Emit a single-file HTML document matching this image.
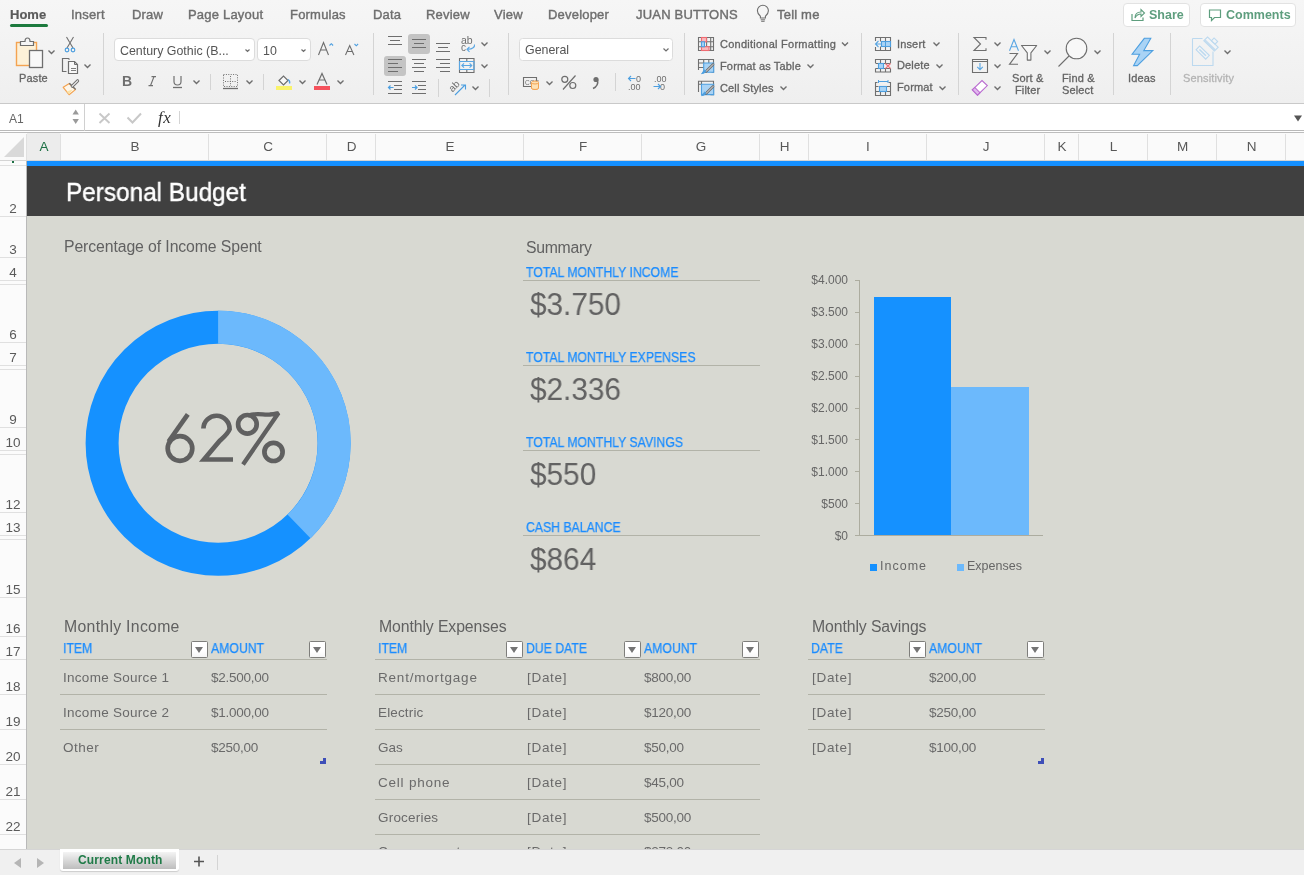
<!DOCTYPE html>
<html><head><meta charset="utf-8">
<style>
*{margin:0;padding:0;box-sizing:border-box}
html,body{width:1304px;height:875px;overflow:hidden;background:#f0f0f0;font-family:"Liberation Sans",sans-serif}
.t,.tab,.rl,.ch,.rn{will-change:transform}
.a{position:absolute}
.t{position:absolute;white-space:nowrap;line-height:1}
svg{position:absolute;overflow:visible}
#ribbon{position:absolute;left:0;top:0;width:1304px;height:104px;background:linear-gradient(#f6f6f6,#efefef);border-bottom:1px solid #c9c9c9}
.tab{position:absolute;top:8px;font-size:13px;font-weight:normal;color:#6e6e6e;white-space:nowrap;line-height:1;letter-spacing:0.2px;-webkit-text-stroke:0.4px #6e6e6e}
.sep{position:absolute;width:1px;background:#d2d2d2}
.rl{position:absolute;font-size:11px;color:#646464;white-space:nowrap;line-height:1;-webkit-text-stroke:0.3px currentColor;letter-spacing:0.15px}
.box{position:absolute;background:#fff;border:1px solid #dcdcdc;border-radius:4px}
.chev{position:absolute;width:6px;height:4px}
#fbar{position:absolute;left:0;top:104px;width:1304px;height:27px;background:#fff;border-bottom:1px solid #b9b9b9}
#colhdr{position:absolute;left:0;top:131px;width:1304px;height:30px;background:#fafafa;border-top:1px solid #fff;border-bottom:1px solid #d4d4d4}
#colhdr:before{content:"";position:absolute;left:0;top:0;width:1304px;height:1px;background:#bdbdbd}
.ch{position:absolute;top:10px;font-size:13.5px;color:#5a5a5a;line-height:1;text-align:center}
.cs{position:absolute;top:131px;width:1px;height:29px;background:#dcdcdc}
#rowhdr{position:absolute;left:0;top:161px;width:27px;height:688px;background:#fbfbfb;border-right:1px solid #b9b9b9;overflow:hidden}
.rn{position:absolute;left:0;width:26px;text-align:center;font-size:13.5px;color:#5a5a5a;line-height:1}
.rline{position:absolute;left:0;width:26px;height:1px;background:#e0e0e0}
#sheet{position:absolute;left:27px;top:161px;width:1277px;height:688px;background:#d8d9d2;overflow:hidden}
#tabbar{position:absolute;left:0;top:849px;width:1304px;height:26px;background:#f0f0f0;border-top:1px solid #d5d5d5}
.lbl{font-size:14px;color:#1a8cff;letter-spacing:0;transform:scaleX(0.875);transform-origin:0 0;-webkit-text-stroke:0.25px #1a8cff}
.big{font-size:32px;color:#626262;transform:scaleX(0.93);transform-origin:0 0}
.hl{position:absolute;height:1px;background:#b2b3a8}
.cell{font-size:13.5px;color:#6a6a6a}
.hd{font-size:14px;color:#1a8cff;letter-spacing:0;transform:scaleX(0.875);transform-origin:0 0;-webkit-text-stroke:0.25px #1a8cff}
.ttl{font-size:15.8px;color:#616161;letter-spacing:-0.1px}
.flt{position:absolute;width:17px;height:17px;background:linear-gradient(#fff 60%,#f6f6f6);border:1px solid #7e7e7b;border-radius:1.5px}
.flt:after{content:"";position:absolute;left:3.2px;top:5.2px;border-left:4.5px solid transparent;border-right:4.5px solid transparent;border-top:6px solid #747474}
.ax{font-size:12px;color:#666;text-align:right;width:50px}
</style></head><body>

<!-- RIBBON -->
<div id="ribbon">
  <div class="tab" style="left:10px;color:#5a5a5a;font-weight:bold;letter-spacing:0;-webkit-text-stroke:0.2px #5a5a5a">Home</div>
  <div class="a" style="left:10px;top:24px;width:38px;height:3px;background:#1d7a3e;border-radius:2px"></div>
  <div class="tab" style="left:71px">Insert</div>
  <div class="tab" style="left:132px">Draw</div>
  <div class="tab" style="left:188px">Page Layout</div>
  <div class="tab" style="left:290px">Formulas</div>
  <div class="tab" style="left:373px">Data</div>
  <div class="tab" style="left:426px">Review</div>
  <div class="tab" style="left:494px">View</div>
  <div class="tab" style="left:548px">Developer</div>
  <div class="tab" style="left:636px">JUAN BUTTONS</div>
  <div class="tab" style="left:777px">Tell me</div>
  <div class="box" style="left:114px;top:38px;width:141px;height:23px"></div>
<div class="box" style="left:257px;top:38px;width:54px;height:23px"></div>
<svg style="left:0;top:0" width="1304" height="104" fill="none" stroke-linecap="butt">
 <rect x="519.5" y="38.5" width="153" height="22" rx="3" fill="#fff" stroke="#dcdcdc"/>
 <g stroke="#d4d4d4" stroke-width="1">
  <line x1="103.5" y1="33" x2="103.5" y2="95"/>
  <line x1="373.5" y1="33" x2="373.5" y2="95"/>
  <line x1="508.5" y1="33" x2="508.5" y2="95"/>
  <line x1="684.5" y1="33" x2="684.5" y2="95"/>
  <line x1="861.5" y1="33" x2="861.5" y2="95"/>
  <line x1="958.5" y1="33" x2="958.5" y2="95"/>
  <line x1="1113.5" y1="33" x2="1113.5" y2="95"/>
  <line x1="1170.5" y1="33" x2="1170.5" y2="95"/>
  <line x1="210.5" y1="74" x2="210.5" y2="90"/>
  <line x1="263.5" y1="74" x2="263.5" y2="90"/>
  <line x1="438.5" y1="79" x2="438.5" y2="97"/>
  <line x1="489.5" y1="79" x2="489.5" y2="97"/>
  <line x1="615.5" y1="73" x2="615.5" y2="91"/>
 </g>
 <!-- chevrons -->
 <g stroke="#6e6e6e" stroke-width="1.4">
  <path d="M48.5 50.5l3 3 3-3"/>
  <path d="M84.5 64.5l3 3 3-3"/>
  <path d="M193.5 80.5l3 3 3-3"/>
  <path d="M246.5 80.5l3 3 3-3"/>
  <path d="M299.5 80.5l3 3 3-3"/>
  <path d="M337.5 80.5l3 3 3-3"/>
  <path d="M481.5 42.5l3 3 3-3"/>
  <path d="M481.5 64.5l3 3 3-3"/>
  <path d="M472.5 86.5l3 3 3-3"/>
  <path d="M546.5 81.5l3 3 3-3"/>
  <path d="M842 42.5l3 3 3-3"/>
  <path d="M807.5 64.5l3 3 3-3"/>
  <path d="M780.5 86.5l3 3 3-3"/>
  <path d="M933.5 42.5l3 3 3-3"/>
  <path d="M936.5 64.5l3 3 3-3"/>
  <path d="M939.5 86.5l3 3 3-3"/>
  <path d="M994.5 42.5l3 3 3-3"/>
  <path d="M994.5 64.5l3 3 3-3"/>
  <path d="M994.5 86.5l3 3 3-3"/>
  <path d="M1044.5 50.5l3 3 3-3"/>
  <path d="M1094.5 50.5l3 3 3-3"/>
  <path d="M1224.5 50.5l3 3 3-3"/>
 </g>
 <g stroke="#6e6e6e" stroke-width="1.2">
  <path d="M245.5 49.5l2 2 2-2"/>
  <path d="M301.5 49.5l2 2 2-2"/>
  <path d="M663.5 48.5l2.5 2.5 2.5-2.5"/>
 </g>
 <!-- Paste -->
 <rect x="16.5" y="42.5" width="20" height="23" fill="#fdf1d8" stroke="#f4a351" stroke-width="1.4"/>
 <path d="M20.5 45.5v-4h4.5c0-2 1-3.5 2.5-3.5s2.5 1.5 2.5 3.5h3.5v4z" fill="#f5f5f5" stroke="#6e6e6e" stroke-width="1.2"/>
 <rect x="29.5" y="50.5" width="13" height="17" fill="#f8f8f8" stroke="#6e6e6e" stroke-width="1.3"/>
 <!-- scissors -->
 <g stroke="#707070" stroke-width="1.1"><path d="M66.5 37l6.5 11M73.5 37l-6.5 11"/></g>
 <g stroke="#4d9fe0" stroke-width="1.2"><circle cx="67" cy="50" r="1.8"/><circle cx="73" cy="50" r="1.8"/></g>
 <!-- copy -->
 <path d="M66.5 71.5h-4v-13h6l1 1" stroke="#6e6e6e" stroke-width="1.2" fill="none"/>
 <path d="M68.5 61.5h6l3 3v9h-9z" stroke="#6e6e6e" stroke-width="1.2" fill="#f8f8f8"/>
 <path d="M74.5 61.5v3h3" stroke="#6e6e6e" stroke-width="1"/>
 <path d="M71 68.5h5M71 70.5h5" stroke="#6e6e6e" stroke-width="0.9"/>
 <!-- format painter -->
 <path d="M69.3 83.6L63.2 87.3L69.1 94.7L75.4 89.6z" fill="#fdf6ea" stroke="#f4a351" stroke-width="1.2" stroke-linejoin="round"/>
 <path d="M66.5 91.5L72.5 89.5L69.1 94.2z" fill="#fbe3a8"/>
 <path d="M69.3 83.3L75.7 89.5" stroke="#707070" stroke-width="1.4"/>
 <path d="M72.3 86.2L77.6 80.8" stroke="#707070" stroke-width="3.2" stroke-linecap="round"/>
 <path d="M72.3 86.2L77.6 80.8" stroke="#f4f4f4" stroke-width="1.2" stroke-linecap="round"/>
 <!-- font -->
 <g stroke="#6e6e6e" stroke-width="1.1">
  <path d="M318.5 55l5-12.5 5 12.5M320.5 50h6"/>
  <path d="M345.5 55l4.2-9.5 4.2 9.5M347.2 51.5h5"/>
 </g>
 <path d="M329.5 45.5l1.8-1.8 1.8 1.8" stroke="#4d9fe0" stroke-width="1.1"/>
 <path d="M354.5 44l1.8 1.8 1.8-1.8" stroke="#4d9fe0" stroke-width="1.1"/>
 <!-- border icon -->
 <path d="M223.5 74.5h14v12h-14z" stroke="#707070" stroke-width="1" stroke-dasharray="1 1.4"/>
 <path d="M230.5 76v10M225 81.5h11" stroke="#707070" stroke-width="1" stroke-dasharray="1 1.4"/>
 <path d="M223 88.5h15" stroke="#6e6e6e" stroke-width="1.3"/>
 <!-- fill color -->
 <path d="M279 80.5l4.5-4.5 4.5 4.5-4.5 4.5z" fill="#f8f8f8" stroke="#6e6e6e" stroke-width="1.2"/>
 <path d="M288 79.5c1.5 1 2 2.5 1.5 4" stroke="#4d9fe0" stroke-width="1.3"/>
 <rect x="276" y="86" width="16" height="4" fill="#f9f36b"/>
 <!-- font color -->
 <path d="M317 84.5l5-11 5 11M319 80h6" stroke="#6e6e6e" stroke-width="1.2"/>
 <rect x="314" y="86" width="16" height="4" fill="#f5525c"/>
 <!-- align -->
 <rect x="408" y="34" width="22" height="20" rx="3" fill="#c4c4c4"/>
 <rect x="384" y="56" width="22" height="20" rx="3" fill="#c4c4c4"/>
 <g stroke="#6e6e6e" stroke-width="1.1">
  <path d="M388 36.5h14M390 40.5h10M388 44.5h14"/>
  <path d="M412 39.5h14M414 43.5h10M412 47.5h14"/>
  <path d="M436 43.5h14M438 47.5h10M436 51.5h14"/>
  <path d="M388 59.5h14M388 63.5h10M388 67.5h14M388 71.5h10"/>
  <path d="M412 59.5h14M414 63.5h10M412 67.5h14M414 71.5h10"/>
  <path d="M436 59.5h14M440 63.5h10M436 67.5h14M440 71.5h10"/>
  <path d="M388 81.5h14M394 85.5h8M394 89.5h8M388 93.5h14"/>
  <path d="M412 81.5h14M418 85.5h8M418 89.5h8M412 93.5h14"/>
 </g>
 <g stroke="#4d9fe0" stroke-width="1.2">
  <path d="M388.5 87.5h5M390.5 85.5l-2 2 2 2"/>
  <path d="M412 87.5h5M415 85.5l2 2-2 2"/>
 </g>
 <!-- wrap text -->
 <text x="461" y="43.8" font-size="10.5" fill="#6e6e6e" stroke="none" font-family="Liberation Sans">ab</text>
 <text x="461" y="50.8" font-size="10" fill="#6e6e6e" stroke="none" font-family="Liberation Sans">c</text>
 <path d="M474.5 44.5c0.5 2.5-2 4.5-6.5 4.8M469.5 46.8l-2.5 2.5 2.5 2.5" stroke="#5aa6e3" stroke-width="1.1"/>
 <!-- merge -->
 <path d="M459.5 58.5h14.5v14h-14.5z" stroke="#6e6e6e" stroke-width="1.1"/>
 <path d="M466.8 58.5v3M466.8 69.5v3" stroke="#6e6e6e" stroke-width="1.1"/>
 <path d="M459.5 61.5h14.5v8h-14.5z" stroke="#5aa6e3" stroke-width="1.1"/>
 <path d="M461.8 65.5h10M464 63.3l-2.2 2.2 2.2 2.2M469.6 63.3l2.2 2.2-2.2 2.2" stroke="#5aa6e3" stroke-width="1.1"/>
 <!-- orientation -->
 <text x="0" y="0" font-size="10" fill="#6e6e6e" stroke="none" font-family="Liberation Sans" transform="translate(452.5 92.5) rotate(-45)">ab</text>
 <path d="M455 95l10-10M461 85h4.5v4.5" stroke="#4d9fe0" stroke-width="1.1"/>
 <!-- number -->
 <path d="M523.5 77.5h13v9h-13z" stroke="#6e6e6e" stroke-width="1.1"/>
 <text x="525" y="85" font-size="6.5" fill="#6e6e6e" stroke="none" font-family="Liberation Sans">CCC</text>
 <g fill="#fde1b5" stroke="#f4a351" stroke-width="1"><ellipse cx="535" cy="88" rx="3.5" ry="1.5"/><path d="M531.5 82.5v5.5a3.5 1.5 0 0 0 7 0v-5.5"/><ellipse cx="535" cy="82.5" rx="3.5" ry="1.5"/></g>
 <g stroke="#6e6e6e" stroke-width="1.2"><circle cx="564.8" cy="79.3" r="3"/><circle cx="572.8" cy="85.5" r="3"/><path d="M575.5 75.5l-12.5 14"/></g>
 <circle cx="596" cy="79.5" r="2.6" fill="#6e6e6e"/>
 <path d="M597.5 80c0.8 4-1 7-4.5 8.5" stroke="#6e6e6e" stroke-width="1.6"/>
 <text x="636" y="82" font-size="9" fill="#6e6e6e" stroke="none" font-family="Liberation Sans">0</text>
 <text x="628" y="90" font-size="9" fill="#6e6e6e" stroke="none" font-family="Liberation Sans">.00</text>
 <path d="M628.5 78.5h7M631 76l-2.5 2.5 2.5 2.5" stroke="#4d9fe0" stroke-width="1.1"/>
 <text x="654" y="82" font-size="9" fill="#6e6e6e" stroke="none" font-family="Liberation Sans">.00</text>
 <text x="660" y="90" font-size="9" fill="#6e6e6e" stroke="none" font-family="Liberation Sans">0</text>
 <path d="M653.5 86.5h7M658 84l2.5 2.5-2.5 2.5" stroke="#4d9fe0" stroke-width="1.1"/>
 <!-- styles icons -->
 <g stroke="#707070" stroke-width="1.1">
  <path d="M698.5 37.5h15v13h-15zM698.5 41.8h15M698.5 46.7h15M701.5 37.5v13M706.6 37.5v13M710.7 37.5v13"/>
 </g>
 <rect x="701.5" y="37.5" width="5" height="4.3" fill="#f8b8bc" stroke="#ef6a72" stroke-width="1.1"/>
 <rect x="701.5" y="46.7" width="7.5" height="3.8" fill="#f8b8bc" stroke="#ef6a72" stroke-width="1.1"/>
 <rect x="701.5" y="41.8" width="3" height="4.9" fill="#a9d3f5" stroke="#4d9fe0" stroke-width="1.1"/>
 <g stroke="#707070" stroke-width="1.1">
  <path d="M698.5 70v-10.5h15v12.8h-2M698.5 63h5.2M698.5 67.5h5.2M703.7 59.5v3.5M708.8 59.5v3.5"/>
  <path d="M698.5 92v-10.7h15v13.3h-3M698.5 84.2h3M701.5 81.3v3"/>
 </g>
 <path d="M703.7 72.3V63h10v9.3z" fill="#a9d3f5" stroke="#4d9fe0" stroke-width="1.1"/>
 <path d="M701.5 94.6V84.2h12.2v10.4z" fill="#a9d3f5" stroke="#4d9fe0" stroke-width="1.1"/>
 <path d="M713 64.5l-7 7" stroke="#707070" stroke-width="2.6" stroke-linecap="round"/>
 <path d="M713 64.5l-7 7" stroke="#f0f0f0" stroke-width="0.9" stroke-linecap="round"/>
 <path d="M706 71c-1 1.8-2.3 2.6-4.5 2.6 1.2-0.6 1.5-2.5 3-3.5z" fill="#4d9fe0" stroke="#4d9fe0" stroke-width="0.9"/>
 <path d="M713 86.5l-7 7" stroke="#707070" stroke-width="2.6" stroke-linecap="round"/>
 <path d="M713 86.5l-7 7" stroke="#f0f0f0" stroke-width="0.9" stroke-linecap="round"/>
 <path d="M706 93c-1 1.8-2.3 2.6-4.5 2.6 1.2-0.6 1.5-2.5 3-3.5z" fill="#4d9fe0" stroke="#4d9fe0" stroke-width="0.9"/>
 <!-- cells icons -->
 <g stroke="#707070" stroke-width="1.1">
  <path d="M875.5 41v-3.5h15v13h-15v-3.5M880.5 41.5h1M880.5 46.5h1M880.5 37.5v3.5M885.5 37.5v3.5M880.5 47v3.5M885.5 47v3.5"/>
  <path d="M875.5 63v-3.5h15v3.5M875.5 68.5v3.5h15v-3.5M875.5 63.5h3M875.5 68.5h3M880.5 59.5v3.5M885.5 59.5v3.5M880.5 68.5v3.5M885.5 68.5v3.5M884 63.5h6.5M884 68.5h6.5"/>
  <path d="M877.5 82.5h-2v13h15v-13h-2M875.5 86.5h3M887 86.5h3.5M875.5 91.5h15M880.5 91.5v4M885.5 91.5v4"/>
 </g>
 <rect x="881.5" y="41.5" width="9" height="5" fill="#a9d3f5" stroke="#4d9fe0" stroke-width="1.1"/>
 <path d="M885.5 41.5v5" stroke="#4d9fe0" stroke-width="1"/>
 <path d="M881.5 44h-6M878.5 41l-3 3 3 3" stroke="#5aa6e3" stroke-width="1.1"/>
 <rect x="878.5" y="63.5" width="5" height="5" fill="#a9d3f5" stroke="#4d9fe0" stroke-width="1.1"/>
 <path d="M885.5 63.5l5 5M890.5 63.5l-5 5" stroke="#f07078" stroke-width="1.1"/>
 <rect x="879.5" y="86.5" width="7" height="5" fill="#a9d3f5" stroke="#4d9fe0" stroke-width="1.1"/>
 <path d="M878.5 81.5h9.5M878.5 80v3M888 80v3" stroke="#4d9fe0" stroke-width="1"/>
 <!-- editing -->
 <path d="M986 39.8v-2.3h-12l6.5 6.5-6.5 6.5h12v-2.3" stroke="#6e6e6e" stroke-width="1.1"/>
 <path d="M972.5 59.5h15v13h-15zM972.5 61.5h15" stroke="#6e6e6e" stroke-width="1.1"/>
 <path d="M980 63v6.5M977.2 66.8l2.8 2.8 2.8-2.8" stroke="#5aa6e3" stroke-width="1.1"/>
 <path d="M972.3 89.8L982 80.6L987.3 85.6L977.5 95.2z" fill="#fff" stroke="#b96bd0" stroke-width="1.1"/>
 <path d="M972.3 89.8L974.8 87.4L980 92.7L977.5 95.2z" fill="#e2b8ee" stroke="#b96bd0" stroke-width="1.1"/>
 <!-- sort filter -->
 <path d="M1009.5 50.8L1014 39.5L1018.5 50.8M1011.2 46.8h5.6" stroke="#5aa6e3" stroke-width="1.1"/>
 <path d="M1009.5 53.5h8l-8 10.8h8.5" stroke="#6e6e6e" stroke-width="1.1"/>
 <path d="M1021.5 45.5h15.2l-5.8 7.3v7.3h-3.6v-7.3z" fill="#f8f8f8" stroke="#6e6e6e" stroke-width="1.1" stroke-linejoin="round"/>
 <circle cx="1076.5" cy="48.5" r="10.3" fill="#f8f8f8" stroke="#6e6e6e" stroke-width="1.1"/>
 <path d="M1069 56l-10.5 10.5" stroke="#6e6e6e" stroke-width="1.1"/>
 <!-- ideas -->
 <path d="M1144.3 38.3h6.5l-7 12.3h9l-15.5 15h-3.7l6-11.4h-7.5z" fill="#a9d3f5" stroke="#4d9fe0" stroke-width="1.1"/>
 <!-- sensitivity -->
 <path d="M1192.5 38.5h10M1192.5 38.5v27h20.5v-14" stroke="#bcd9ef" stroke-width="1.1"/>
 <g transform="translate(1202.7 52.6) rotate(44)" stroke="#bcd9ef" stroke-width="1.1" fill="#f2f4f6"><rect x="-6.7" y="-2.6" width="13.4" height="5.2"/><path d="M-4.5 0h9" stroke-width="1.6"/></g>
 <g transform="translate(1211 44) rotate(44)" fill="#f2f4f6" stroke="#bcd9ef" stroke-width="1.1"><rect x="-7.4" y="-2.7" width="14.8" height="5.4"/><rect x="-7.4" y="0.6" width="14.8" height="2.1" fill="#c4dcef" stroke="none"/><rect x="-2" y="-6.5" width="5" height="3.8"/></g>
</svg>
<div class="t" style="left:120px;top:44.5px;font-size:12.4px;color:#555">Century Gothic (B...</div>
<div class="t" style="left:263px;top:44.5px;font-size:12.4px;color:#555">10</div>
<div class="t" style="left:525px;top:44.4px;font-size:12.4px;color:#555">General</div>
<div class="t" style="left:122px;top:74.2px;font-size:14px;font-weight:bold;color:#6e6e6e">B</div>
<svg style="left:0;top:0" width="200" height="100" fill="none" stroke="#707070" stroke-width="1.2"><path d="M151.5 76.6h4.5M148.5 85.6h4.5M154 76.6L150.5 85.6"/></svg>
<svg style="left:0;top:0" width="200" height="100" fill="none" stroke="#707070" stroke-width="1.2"><path d="M174 76v5.5a3.5 3.5 0 0 0 7 0V76"/><path d="M173 87.5h9" stroke-width="1.3"/></svg>
<div class="t rl" style="left:19px;top:72.7px">Paste</div>
<div class="t rl" style="left:720px;top:39px;letter-spacing:0.25px">Conditional Formatting</div>
<div class="t rl" style="left:720px;top:60.7px">Format as Table</div>
<div class="t rl" style="left:720px;top:82.5px">Cell Styles</div>
<div class="t rl" style="left:897px;top:38.5px">Insert</div>
<div class="t rl" style="left:897px;top:60.2px">Delete</div>
<div class="t rl" style="left:897px;top:82px">Format</div>
<div class="t rl" style="left:1012px;top:73.2px">Sort &amp;</div>
<div class="t rl" style="left:1015px;top:85px">Filter</div>
<div class="t rl" style="left:1062px;top:73.2px">Find &amp;</div>
<div class="t rl" style="left:1062px;top:85px">Select</div>
<div class="t rl" style="left:1128px;top:73.2px">Ideas</div>
<div class="t rl" style="left:1183px;top:73.2px;color:#b4b4b4">Sensitivity</div>
<!-- bulb -->
<svg style="left:0;top:0" width="1304" height="30" fill="none">
 <g transform="translate(0.9 1)"><path d="M759.5 17v-1.8c-2-1.6-3-3.3-3-5.4a5.5 5.5 0 0 1 11 0c0 2.1-1 3.8-3 5.4v1.8z" stroke="#6e6e6e" stroke-width="1.1"/>
 <path d="M759.8 18.8h4.4M760.3 20.3h3.4" stroke="#6e6e6e" stroke-width="1"/></g>
</svg>
<!-- share/comments -->
<div class="box" style="left:1123px;top:3px;width:67px;height:24px;border-color:#e2e2e2"></div>
<div class="box" style="left:1200px;top:3px;width:96px;height:24px;border-color:#e2e2e2"></div>
<svg style="left:0;top:0" width="1304" height="30" fill="none">
 <path d="M1132 14v6.5h11v-3" stroke="#5e9e7e" stroke-width="1.2"/>
 <path d="M1135 18c0-4 2.5-6 6-6v-2.5l3.5 3.5-3.5 3.5v-2.5c-3 0-4.5 1-6 4z" stroke="#5e9e7e" stroke-width="1.1"/>
 <path d="M1209.5 10h11v7.5h-6l-3 3v-3h-2z" stroke="#5e9e7e" stroke-width="1.2"/>
</svg>
<div class="t" style="left:1149px;top:8.8px;font-size:12.5px;font-weight:bold;color:#5e9e7e">Share</div>
<div class="t" style="left:1226px;top:8.8px;font-size:12.5px;font-weight:bold;color:#5e9e7e">Comments</div>

</div>

<!-- FORMULA BAR -->
<div id="fbar"></div>
<div class="t" style="left:9px;top:112.8px;font-size:12px;color:#666">A1</div>
<svg style="left:0;top:104px" width="1304" height="27" fill="none">
 <path d="M72.5 10.5l3.2-5 3.2 5z" fill="#9a9a9a"/>
 <path d="M72.5 15l3.2 5 3.2-5z" fill="#9a9a9a"/>
 <path d="M84.5 0v27" stroke="#d0d0d0"/>
 <path d="M99.5 9.5l10 9.5M109.5 9.5l-10 9.5" stroke="#c8c8c8" stroke-width="1.9"/>
 <path d="M127.5 13.5l5 5 8.5-9" stroke="#c8c8c8" stroke-width="2"/>
 <path d="M179.5 7v13" stroke="#d4d4d4"/>
 <path d="M1294 11.5h8l-4 6z" fill="#555"/>
</svg>
<div class="t" style="left:157.5px;top:108.5px;font-size:17px;font-style:italic;font-family:'Liberation Serif',serif;color:#333;letter-spacing:0.5px">fx</div>


<!-- COLUMN HEADER -->
<div id="colhdr"></div>
<div class="a" style="left:27px;top:133px;width:33px;height:27px;background:#ececec"></div>
<svg style="left:0;top:131px" width="1304" height="30" fill="none">
<path d="M26.5 3v26" stroke="#e0e0e0"/>
<path d="M60.5 3v26" stroke="#e0e0e0"/>
<path d="M208.5 3v26" stroke="#e0e0e0"/>
<path d="M326.5 3v26" stroke="#e0e0e0"/>
<path d="M375.5 3v26" stroke="#e0e0e0"/>
<path d="M523.5 3v26" stroke="#e0e0e0"/>
<path d="M641.5 3v26" stroke="#e0e0e0"/>
<path d="M759.5 3v26" stroke="#e0e0e0"/>
<path d="M808.5 3v26" stroke="#e0e0e0"/>
<path d="M926.5 3v26" stroke="#e0e0e0"/>
<path d="M1044.5 3v26" stroke="#e0e0e0"/>
<path d="M1078.5 3v26" stroke="#e0e0e0"/>
<path d="M1147.5 3v26" stroke="#e0e0e0"/>
<path d="M1216.5 3v26" stroke="#e0e0e0"/>
<path d="M1285.5 3v26" stroke="#e0e0e0"/>
<path d="M24 6v20h-20z" fill="#d9d9d9"/>
</svg>
<div class="ch" style="left:26.5px;width:34.0px;top:139.5px;color:#1e7145">A</div>
<div class="ch" style="left:60.5px;width:148.0px;top:139.5px;color:#585858">B</div>
<div class="ch" style="left:208.5px;width:118.0px;top:139.5px;color:#585858">C</div>
<div class="ch" style="left:326.5px;width:49.0px;top:139.5px;color:#585858">D</div>
<div class="ch" style="left:375.5px;width:148.0px;top:139.5px;color:#585858">E</div>
<div class="ch" style="left:523.5px;width:118.0px;top:139.5px;color:#585858">F</div>
<div class="ch" style="left:641.5px;width:118.0px;top:139.5px;color:#585858">G</div>
<div class="ch" style="left:759.5px;width:49.0px;top:139.5px;color:#585858">H</div>
<div class="ch" style="left:808.5px;width:118.0px;top:139.5px;color:#585858">I</div>
<div class="ch" style="left:926.5px;width:118.0px;top:139.5px;color:#585858">J</div>
<div class="ch" style="left:1044.5px;width:34.0px;top:139.5px;color:#585858">K</div>
<div class="ch" style="left:1078.5px;width:69.0px;top:139.5px;color:#585858">L</div>
<div class="ch" style="left:1147.5px;width:69.0px;top:139.5px;color:#585858">M</div>
<div class="ch" style="left:1216.5px;width:69.0px;top:139.5px;color:#585858">N</div>

<!-- ROW HEADER -->
<div id="rowhdr"></div>
<svg style="left:0;top:0" width="27" height="875" fill="none">
<path d="M0 165.5h26" stroke="#e0e0e0"/>
<path d="M0 216.5h26" stroke="#e0e0e0"/>
<path d="M0 257.5h26" stroke="#e0e0e0"/>
<path d="M0 280.5h26" stroke="#e0e0e0"/>
<path d="M0 284.5h26" stroke="#e0e0e0"/>
<path d="M0 342.5h26" stroke="#e0e0e0"/>
<path d="M0 365.5h26" stroke="#e0e0e0"/>
<path d="M0 369.5h26" stroke="#e0e0e0"/>
<path d="M0 427.5h26" stroke="#e0e0e0"/>
<path d="M0 450.5h26" stroke="#e0e0e0"/>
<path d="M0 454.5h26" stroke="#e0e0e0"/>
<path d="M0 512.5h26" stroke="#e0e0e0"/>
<path d="M0 535.5h26" stroke="#e0e0e0"/>
<path d="M0 539.5h26" stroke="#e0e0e0"/>
<path d="M0 597.5h26" stroke="#e0e0e0"/>
<path d="M0 636.5h26" stroke="#e0e0e0"/>
<path d="M0 659.5h26" stroke="#e0e0e0"/>
<path d="M0 694.5h26" stroke="#e0e0e0"/>
<path d="M0 729.5h26" stroke="#e0e0e0"/>
<path d="M0 764.5h26" stroke="#e0e0e0"/>
<path d="M0 799.5h26" stroke="#e0e0e0"/>
<path d="M0 834.5h26" stroke="#e0e0e0"/>
<path d="M0 869.5h26" stroke="#e0e0e0"/>
</svg>
<div class="rn" style="top:201.6px">2</div>
<div class="rn" style="top:242.6px">3</div>
<div class="rn" style="top:265.6px">4</div>
<div class="rn" style="top:327.6px">6</div>
<div class="rn" style="top:350.6px">7</div>
<div class="rn" style="top:412.6px">9</div>
<div class="rn" style="top:435.6px">10</div>
<div class="rn" style="top:497.6px">12</div>
<div class="rn" style="top:520.6px">13</div>
<div class="rn" style="top:582.6px">15</div>
<div class="rn" style="top:621.6px">16</div>
<div class="rn" style="top:644.6px">17</div>
<div class="rn" style="top:679.6px">18</div>
<div class="rn" style="top:714.6px">19</div>
<div class="rn" style="top:749.6px">20</div>
<div class="rn" style="top:784.6px">21</div>
<div class="rn" style="top:819.6px">22</div>
<div class="rn" style="top:854.6px">23</div>
<div class="a" style="left:12px;top:161px;width:2px;height:2px;background:#1e7145"></div>

<!-- SHEET -->
<div id="sheet"></div>
<div class="a" style="left:27px;top:161px;width:1277px;height:5px;background:#1590ff"></div>
<div class="a" style="left:27px;top:166px;width:1277px;height:50px;background:#404040"></div>
<div class="t" style="left:65.5px;top:178.6px;font-size:26px;color:#fff;transform:scaleX(0.936);transform-origin:0 0;-webkit-text-stroke:0.45px #fff">Personal Budget</div>

<div class="t ttl" style="left:64px;top:239.4px">Percentage of Income Spent</div>
<div class="t ttl" style="left:526px;top:239.8px;letter-spacing:-0.3px">Summary</div>

<div class="t lbl" style="left:526px;top:265.0px">TOTAL MONTHLY INCOME</div>
<div class="hl" style="left:523px;top:280px;width:237px"></div>
<div class="t big" style="left:529.5px;top:287.5px">$3.750</div>
<div class="t lbl" style="left:526px;top:350.0px">TOTAL MONTHLY EXPENSES</div>
<div class="hl" style="left:523px;top:365px;width:237px"></div>
<div class="t big" style="left:529.5px;top:372.5px">$2.336</div>
<div class="t lbl" style="left:526px;top:435.0px">TOTAL MONTHLY SAVINGS</div>
<div class="hl" style="left:523px;top:450px;width:237px"></div>
<div class="t big" style="left:529.5px;top:457.5px">$550</div>
<div class="t lbl" style="left:526px;top:520.0px">CASH BALANCE</div>
<div class="hl" style="left:523px;top:535px;width:237px"></div>
<div class="t big" style="left:529.5px;top:542.5px">$864</div>

<!-- donut -->
<svg style="left:0;top:0" width="1304" height="875">
  <circle cx="218.1" cy="443.2" r="116" fill="none" stroke="#1591ff" stroke-width="33"/>
  <path d="M218.1 327.2 A116 116 0 0 1 299.0 526.4" fill="none" stroke="#6cb9fc" stroke-width="33"/>
</svg>
<svg style="left:0;top:0" width="1304" height="875" fill="none" stroke="#606060" stroke-width="4.7">
 <circle cx="180" cy="448.5" r="12.3"/>
 <path d="M187.8 414.3L168.6 441.5"/>
 <path d="M203.4 428.5A13 13 0 1 1 229.6 429.2C228 433.5 225 436 220 440.5L204 459.5H233"/>
 <circle cx="247.4" cy="424.3" r="9.3"/>
 <path d="M248 415.5C258 412.5 264 415.5 270 414.5C274 414 276 413.5 278.5 413L243 464.5" stroke-width="4.3" stroke-linejoin="bevel"/>
 <circle cx="273.5" cy="451.9" r="9.1"/>
</svg>

<!-- bar chart -->
<div class="t ax" style="left:798px;top:274.3px">$4.000</div>
<div class="t ax" style="left:798px;top:306.3px">$3.500</div>
<div class="t ax" style="left:798px;top:338.3px">$3.000</div>
<div class="t ax" style="left:798px;top:370.3px">$2.500</div>
<div class="t ax" style="left:798px;top:402.3px">$2.000</div>
<div class="t ax" style="left:798px;top:434.3px">$1.500</div>
<div class="t ax" style="left:798px;top:466.3px">$1.000</div>
<div class="t ax" style="left:798px;top:498.3px">$500</div>
<div class="t ax" style="left:798px;top:530.3px">$0</div>
<div class="a" style="left:859px;top:280px;width:1px;height:256px;background:#acac9f"></div>
<div class="a" style="left:855px;top:535px;width:188px;height:1px;background:#acac9f"></div>
<div class="a" style="left:855px;top:280px;width:4px;height:1px;background:#acac9f"></div>
<div class="a" style="left:855px;top:312px;width:4px;height:1px;background:#acac9f"></div>
<div class="a" style="left:855px;top:344px;width:4px;height:1px;background:#acac9f"></div>
<div class="a" style="left:855px;top:376px;width:4px;height:1px;background:#acac9f"></div>
<div class="a" style="left:855px;top:408px;width:4px;height:1px;background:#acac9f"></div>
<div class="a" style="left:855px;top:439px;width:4px;height:1px;background:#acac9f"></div>
<div class="a" style="left:855px;top:471px;width:4px;height:1px;background:#acac9f"></div>
<div class="a" style="left:855px;top:503px;width:4px;height:1px;background:#acac9f"></div>
<div class="a" style="left:874px;top:297px;width:77px;height:238px;background:#1591ff"></div>
<div class="a" style="left:951px;top:387px;width:78px;height:148px;background:#6cb9fc"></div>
<div class="a" style="left:870px;top:564px;width:7px;height:7px;background:#1591ff"></div>
<div class="t" style="left:880px;top:560.2px;font-size:12.5px;color:#666;letter-spacing:1px">Income</div>
<div class="a" style="left:957px;top:564px;width:7px;height:7px;background:#6cb9fc"></div>
<div class="t" style="left:967px;top:560.2px;font-size:12.5px;color:#666">Expenses</div>

<!-- tables -->
<div class="t ttl" style="left:64px;top:618.5px;letter-spacing:0.3px">Monthly Income</div>
<div class="t ttl" style="left:379px;top:618.5px">Monthly Expenses</div>
<div class="t ttl" style="left:812px;top:618.5px">Monthly Savings</div>

<div class="t hd" style="left:63px;top:641.2px">ITEM</div>
<div class="t hd" style="left:211px;top:641.2px">AMOUNT</div>
<div class="t hd" style="left:378px;top:641.2px">ITEM</div>
<div class="t hd" style="left:526px;top:641.2px">DUE DATE</div>
<div class="t hd" style="left:644px;top:641.2px">AMOUNT</div>
<div class="t hd" style="left:811px;top:641.2px">DATE</div>
<div class="t hd" style="left:929px;top:641.2px">AMOUNT</div>
<div class="flt" style="left:191px;top:641px"></div>
<div class="flt" style="left:309px;top:641px"></div>
<div class="flt" style="left:506px;top:641px"></div>
<div class="flt" style="left:624px;top:641px"></div>
<div class="flt" style="left:742px;top:641px"></div>
<div class="flt" style="left:909px;top:641px"></div>
<div class="flt" style="left:1027px;top:641px"></div>

<div class="hl" style="left:60px;top:659px;width:267px"></div>
<div class="hl" style="left:60px;top:694px;width:267px"></div>
<div class="hl" style="left:60px;top:729px;width:267px"></div>
<div class="hl" style="left:375px;top:659px;width:385px"></div>
<div class="hl" style="left:375px;top:694px;width:385px"></div>
<div class="hl" style="left:375px;top:729px;width:385px"></div>
<div class="hl" style="left:375px;top:764px;width:385px"></div>
<div class="hl" style="left:375px;top:799px;width:385px"></div>
<div class="hl" style="left:375px;top:834px;width:385px"></div>
<div class="hl" style="left:808px;top:659px;width:237px"></div>
<div class="hl" style="left:808px;top:694px;width:237px"></div>
<div class="hl" style="left:808px;top:729px;width:237px"></div>

<div class="t cell" style="left:63px;top:670.6px;letter-spacing:0.28px">Income Source 1</div>
<div class="t cell" style="left:211px;top:670.6px;letter-spacing:-0.25px">$2.500,00</div>
<div class="t cell" style="left:63px;top:705.6px;letter-spacing:0.28px">Income Source 2</div>
<div class="t cell" style="left:211px;top:705.6px;letter-spacing:-0.25px">$1.000,00</div>
<div class="t cell" style="left:63px;top:740.6px;letter-spacing:0.5px">Other</div>
<div class="t cell" style="left:211px;top:740.6px;letter-spacing:-0.25px">$250,00</div>

<div class="t cell" style="left:378px;top:670.6px;letter-spacing:0.8px">Rent/mortgage</div>
<div class="t cell" style="left:527px;top:670.6px;letter-spacing:0.7px">[Date]</div>
<div class="t cell" style="left:644px;top:670.6px;letter-spacing:-0.25px">$800,00</div>
<div class="t cell" style="left:378px;top:705.6px;letter-spacing:0.15px">Electric</div>
<div class="t cell" style="left:527px;top:705.6px;letter-spacing:0.7px">[Date]</div>
<div class="t cell" style="left:644px;top:705.6px;letter-spacing:-0.25px">$120,00</div>
<div class="t cell" style="left:378px;top:740.6px;letter-spacing:0px">Gas</div>
<div class="t cell" style="left:527px;top:740.6px;letter-spacing:0.7px">[Date]</div>
<div class="t cell" style="left:644px;top:740.6px;letter-spacing:-0.25px">$50,00</div>
<div class="t cell" style="left:378px;top:775.6px;letter-spacing:0.78px">Cell phone</div>
<div class="t cell" style="left:527px;top:775.6px;letter-spacing:0.7px">[Date]</div>
<div class="t cell" style="left:644px;top:775.6px;letter-spacing:-0.25px">$45,00</div>
<div class="t cell" style="left:378px;top:810.6px;letter-spacing:0.2px">Groceries</div>
<div class="t cell" style="left:527px;top:810.6px;letter-spacing:0.7px">[Date]</div>
<div class="t cell" style="left:644px;top:810.6px;letter-spacing:-0.25px">$500,00</div>
<div class="t cell" style="left:378px;top:844.6px;letter-spacing:0.5px">Car payment</div>
<div class="t cell" style="left:527px;top:844.6px;letter-spacing:0.7px">[Date]</div>
<div class="t cell" style="left:644px;top:844.6px;letter-spacing:-0.25px">$273,00</div>

<div class="t cell" style="left:812px;top:670.6px;letter-spacing:0.7px">[Date]</div>
<div class="t cell" style="left:929px;top:670.6px;letter-spacing:-0.25px">$200,00</div>
<div class="t cell" style="left:812px;top:705.6px;letter-spacing:0.7px">[Date]</div>
<div class="t cell" style="left:929px;top:705.6px;letter-spacing:-0.25px">$250,00</div>
<div class="t cell" style="left:812px;top:740.6px;letter-spacing:0.7px">[Date]</div>
<div class="t cell" style="left:929px;top:740.6px;letter-spacing:-0.25px">$100,00</div>

<div class="a" style="left:323px;top:758px;width:3px;height:3px;background:#3e4fb8"></div>
<div class="a" style="left:320px;top:761px;width:6px;height:3px;background:#3e4fb8"></div>
<div class="a" style="left:1041px;top:758px;width:3px;height:3px;background:#3e4fb8"></div>
<div class="a" style="left:1038px;top:761px;width:6px;height:3px;background:#3e4fb8"></div>


<div id="tabbar"></div>
<svg style="left:0;top:849px" width="1304" height="26" fill="none">
 <path d="M21 9v10l-7-5z" fill="#b5b5b5"/>
 <path d="M37 9v10l7-5z" fill="#b5b5b5"/>
 <path d="M217.5 6v15" stroke="#d4d4d4"/>
 <path d="M194 12.5h10M199 7.5v10" stroke="#555" stroke-width="1.6"/>
</svg>
<div class="a" style="left:60px;top:849px;width:119px;height:22px;background:#fff;border-radius:0 0 3px 3px;box-shadow:0 1px 1px rgba(0,0,0,0.15)"></div>
<div class="a" style="left:63px;top:852px;width:113px;height:17px;background:linear-gradient(#f4f4f4,#bdbdbd)"></div>
<div class="t" style="left:77.5px;top:854.2px;font-size:12px;font-weight:bold;color:#1f7a47;letter-spacing:0.15px">Current Month</div>


</body></html>
